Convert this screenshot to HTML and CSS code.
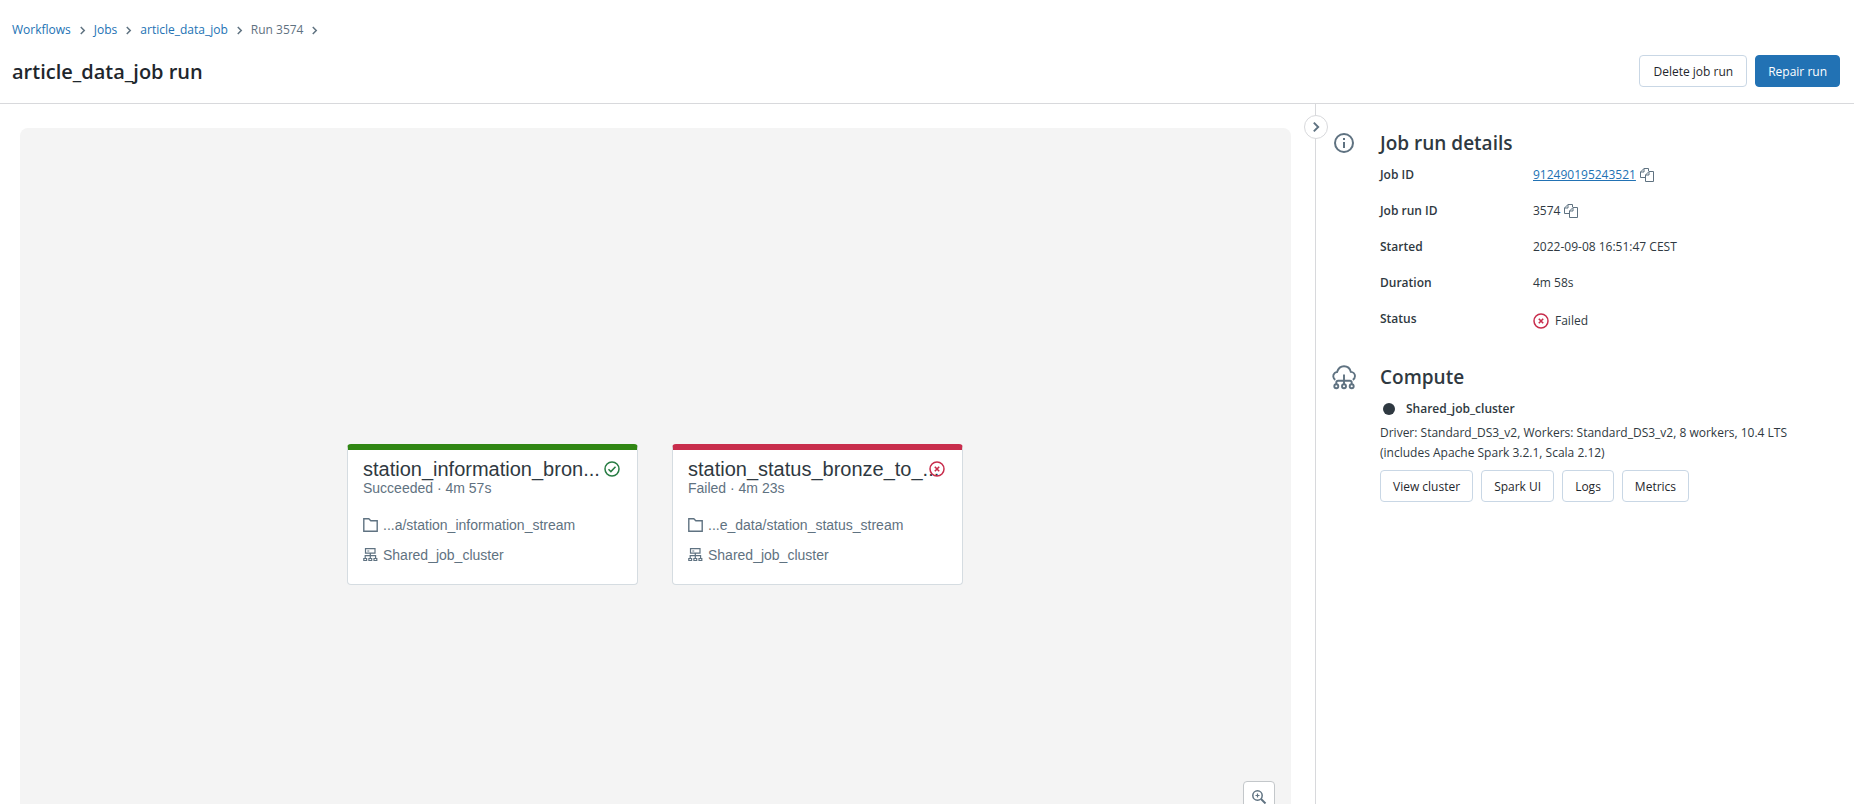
FILE: index.html
```html
<!DOCTYPE html>
<html lang="en">
<head>
<meta charset="utf-8">
<title>article_data_job run</title>
<link rel="stylesheet" href="styles.css">
</head>
<body>
<svg class="sprite" aria-hidden="true">
  <symbol id="chevron" viewBox="0 0 16 16"><path d="M5.500 3l5 5-5 5" fill="none" stroke="currentColor" stroke-width="2.200"/></symbol>
  <symbol id="copy" viewBox="0 0 14 14"><path d="M5 9.500H.5V4L4 .5h4.500V3M4 .5V4H.5M5.500 7L9 3.500h4.500v10h-8zM9 3.500V7H5.500" fill="none" stroke="currentColor"/></symbol>
  <symbol id="fail" viewBox="0 0 16 16"><path d="M5.800 5.800l4.400 4.400M10.200 5.800l-4.400 4.400" fill="none" stroke="currentColor" stroke-width="1.600"/><circle cx="8" cy="8" r="7" fill="none" stroke="currentColor" stroke-width="1.500"/></symbol>
  <symbol id="success" viewBox="0 0 16 16"><path d="M4.500 8.300l2.400 2.300 4.600-4.800" fill="none" stroke="currentColor" stroke-width="1.500"/><circle cx="8" cy="8" r="7" fill="none" stroke="currentColor" stroke-width="1.500"/></symbol>
  <symbol id="folder" viewBox="0 0 16 16"><path d="M.8 1.800h5l2 2h6.400v10.400H.8z" fill="none" stroke="currentColor" stroke-width="1.400"/></symbol>
  <symbol id="cluster" viewBox="0 0 16 16"><path d="M2.500 1.700h9.500v4.500H2.500zM7.300 6.200v5M2.200 11.200V8.700h10.400v2.500" fill="none" stroke="currentColor" stroke-width="1.200"/><path d="M4.300 4h2" stroke="currentColor"/><path d="M.8 11.500h2.800v2H.8zM5.900 11.500h2.800v2H5.900zM11 11.500h2.800v2H11z" fill="none" stroke="currentColor" stroke-width="1.200"/></symbol>
</svg>

<header class="header">
  <nav class="crumbs" aria-label="Breadcrumb">
    <a href="#">Workflows</a><svg><use href="#chevron"/></svg>
    <a href="#">Jobs</a><svg><use href="#chevron"/></svg>
    <a href="#">article_data_job</a><svg><use href="#chevron"/></svg>
    <span>Run 3574</span><svg><use href="#chevron"/></svg>
  </nav>
  <div class="title-row">
    <h1>article_data_job run</h1>
    <div class="actions">
      <button class="btn wide" type="button">Delete job run</button>
      <button class="btn primary" type="button">Repair run</button>
    </div>
  </div>
</header>

<div class="body">
  <main class="main">
    <div class="canvas">
      <article class="task ok">
        <div class="task-head"><h3>station_information_bron...</h3><svg class="state"><use href="#success"/></svg></div>
        <p class="result">Succeeded · 4m 57s</p>
        <p class="meta"><svg><use href="#folder"/></svg>...a/station_information_stream</p>
        <p class="meta"><svg><use href="#cluster"/></svg>Shared_job_cluster</p>
      </article>
      <article class="task bad">
        <div class="task-head"><h3>station_status_bronze_to_...</h3><svg class="state"><use href="#fail"/></svg></div>
        <p class="result">Failed · 4m 23s</p>
        <p class="meta"><svg><use href="#folder"/></svg>...e_data/station_status_stream</p>
        <p class="meta"><svg><use href="#cluster"/></svg>Shared_job_cluster</p>
      </article>
      <button class="zoom" type="button" aria-label="Zoom in">
        <svg viewBox="0 0 16 16" fill="none" stroke="currentColor"><circle cx="6.500" cy="6.500" r="4.700" stroke-width="1.500"/><path d="M10 10l4.500 4.500" stroke-width="1.900"/><path d="M6.500 4.500v4M4.500 6.500h4" stroke-width="1.200"/></svg>
      </button>
    </div>
  </main>

  <aside class="side">
    <button class="collapse" type="button" aria-label="Collapse panel"><svg><use href="#chevron"/></svg></button>
    <section class="section">
      <svg class="section-icon" viewBox="0 0 24 24" fill="none" stroke="currentColor"><circle cx="12" cy="12" r="9" stroke-width="2"/><path d="M12 11v6M12 7v2" stroke-width="2"/></svg>
      <div class="section-body">
        <h2>Job run details</h2>
        <dl class="details">
          <dt>Job ID</dt><dd><a href="#">912490195243521</a><svg class="copy"><use href="#copy"/></svg></dd>
          <dt>Job run ID</dt><dd>3574<svg class="copy"><use href="#copy"/></svg></dd>
          <dt>Started</dt><dd>2022-09-08 16:51:47 CEST</dd>
          <dt>Duration</dt><dd>4m 58s</dd>
          <dt>Status</dt><dd class="status"><svg><use href="#fail"/></svg>Failed</dd>
        </dl>
      </div>
    </section>
    <section class="section">
      <svg class="section-icon" viewBox="0 0 24 24" fill="none" stroke="currentColor" stroke-width="1.900"><path d="M3.300 14.800C1 13.500.5 10 2.500 8.200 3.300 7.400 4.200 7.100 5 7.100 6.200 3.500 8.800 1.300 12 1.300c3.300 0 6 2.300 6.800 5.600 2.300.1 4.200 1.900 4.200 4.200 0 1.500-.9 3-2.200 3.700"/><path d="M12 9.500v10M4.300 19.200v-1.700q0-1.800 1.800-1.800h11.800q1.800 0 1.800 1.800v1.700"/><circle cx="4.300" cy="21.300" r="2"/><circle cx="12" cy="21.300" r="2"/><circle cx="19.700" cy="21.300" r="2"/></svg>
      <div class="section-body">
        <h2>Compute</h2>
        <p class="cluster"><span class="dot"></span>Shared_job_cluster</p>
        <p class="spec">Driver: Standard_DS3_v2, Workers: Standard_DS3_v2, 8 workers, 10.4 LTS (includes Apache Spark 3.2.1, Scala 2.12)</p>
        <div class="links">
          <button class="btn" type="button">View cluster</button>
          <button class="btn" type="button">Spark UI</button>
          <button class="btn" type="button">Logs</button>
          <button class="btn" type="button">Metrics</button>
        </div>
      </div>
    </section>
  </aside>
</div>
</body>
</html>
```
FILE: styles.css
```css
* { box-sizing: border-box; }
body {
  margin: 0;
  height: 100vh;
  overflow: hidden;
  display: flex;
  flex-direction: column;
  background: #fff;
  color: #2f3941;
  font: 12px/20px "Open Sans", "Noto Sans", sans-serif;
}
h1, h2, h3, p, dl, dd { margin: 0; }
a { color: #2272b4; }
svg { flex: none; width: 16px; height: 16px; overflow: visible; }
.sprite { position: absolute; width: 0; height: 0; }

.header {
  flex: none;
  padding: 20px 14px 16px 12px;
  border-bottom: 1px solid #d8d9dc;
}
.crumbs { display: flex; align-items: center; gap: 6px; color: #5f7281; }
.crumbs a { text-decoration: none; }
.crumbs svg { width: 11px; height: 11px; }
.title-row { display: flex; justify-content: space-between; align-items: center; margin-top: 15px; }
h1 { padding-top: 2px; font-size: 20px; line-height: 28px; font-weight: 600; color: #1f272d; }
.actions, .links { display: flex; gap: 8px; }
.btn {
  height: 32px;
  padding: 1px 12px 0;
  border: 1px solid #c9d7e5;
  border-radius: 4px;
  background: #fff;
  color: #1f272d;
  font: inherit;
}
.btn.wide { padding: 1px 13px 0; }
.btn.primary { background: #2272b4; border-color: #2272b4; color: #fff; }

.body { flex: 1; min-height: 0; display: flex; }
.main { flex: 1; min-width: 0; padding: 24px 24px 0 20px; overflow: hidden; }
.canvas {
  position: relative;
  display: flex;
  justify-content: center;
  gap: 34px;
  padding: 316px 25px 316px 24px;
  border-radius: 8px;
  background: #f4f4f4;
}
.task {
  width: 291px;
  padding: 9px 16px 20px 15px;
  border: 1px solid #d5dce1;
  border-top: 6px solid;
  border-radius: 4px;
  background: #fff;
  color: #5f7281;
  font: 14px/18px "Liberation Sans", Arial, sans-serif;
}
.ok { border-top-color: #308613; }
.bad { border-top-color: #c82d4c; }
.task-head { position: relative; }
.task h3 {
  white-space: nowrap;
  color: #2f3941;
  font-size: 20px;
  line-height: 20px;
  font-weight: 400;
}
.state { position: absolute; top: 2px; right: 1px; }
.ok .state { color: #277c43; }
.bad .state { color: #c82d4c; }
.meta { display: flex; align-items: center; gap: 4px; margin-top: 12px; }
.result + .meta { margin-top: 19px; }
.zoom {
  position: absolute;
  right: 16px;
  bottom: 88px;
  width: 32px;
  height: 32px;
  padding: 0;
  display: grid;
  place-items: center;
  border: 1px solid #c3c7ca;
  border-radius: 4px;
  background: #fff;
  color: #5f7281;
}

.side {
  position: relative;
  flex: none;
  width: 539px;
  padding: 26px 44px 0 16px;
  border-left: 1px solid #d8d9dc;
}
.collapse {
  position: absolute;
  left: -12px;
  top: 11px;
  width: 24px;
  height: 24px;
  padding: 0;
  display: grid;
  place-items: center;
  border: 1px solid #d8d9dc;
  border-radius: 50%;
  background: #fff;
  color: #5f7281;
}
.collapse svg { width: 14px; height: 14px; }
.section { display: flex; gap: 24px; margin-bottom: 31px; }
.section-icon { width: 24px; height: 24px; margin-top: 1px; color: #5f7281; }
.section-body { flex: 1; }
h2 { font-size: 19px; line-height: 26px; font-weight: 600; }
.details { display: grid; grid-template-columns: 153px 1fr; row-gap: 16px; margin-top: 9px; }
.details dt { font-weight: 600; }
.details dd { display: flex; align-items: center; gap: 4px; }
.details .copy { width: 14px; height: 14px; color: #5f7281; }
.details .status { gap: 6px; line-height: 24px; }
.status svg { color: #c82d4c; }
.cluster { display: flex; align-items: center; gap: 11px; margin-top: 9px; padding-left: 3px; font-weight: 600; }
.dot { width: 12px; height: 12px; border-radius: 50%; background: #2f3941; }
.spec { margin: 4px 0 7px; }
```
